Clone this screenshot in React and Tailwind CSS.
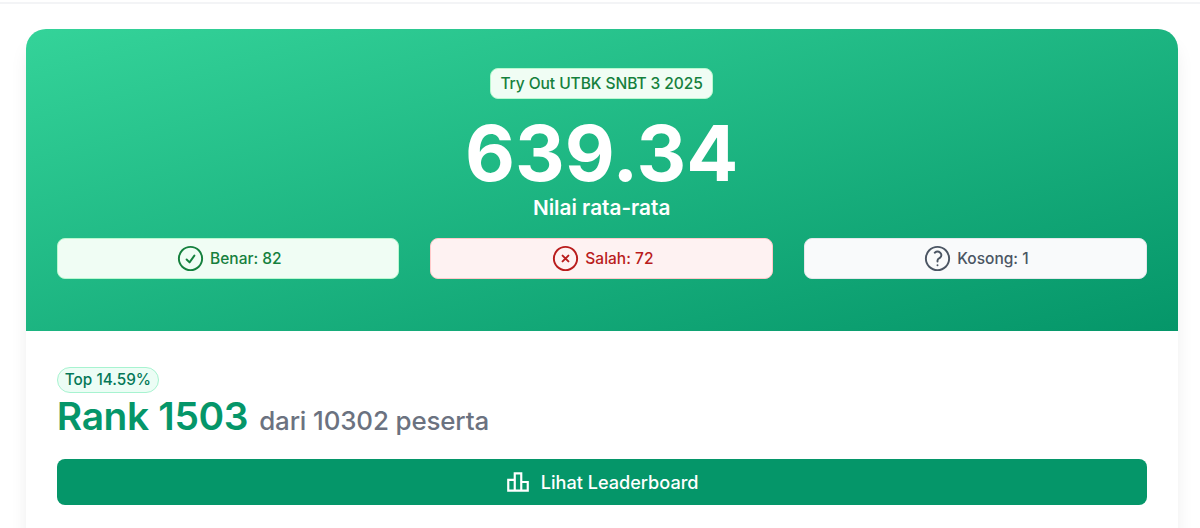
import React from "react";
import { MdOutlineLeaderboard } from "react-icons/md";

const result = {
  title: "Try Out UTBK SNBT 3 2025",
  score: "639.34",
  percentile: "14.59%",
  rank: 1503,
  participants: 10302,
};

const stats = [
  {
    label: "Benar",
    value: 82,
    style: "bg-[#f0fdf4] border-green-200 text-[#15803d]",
    icon: "M9 12.75 11.25 15 15 9.75M21 12a9 9 0 1 1-18 0 9 9 0 0 1 18 0Z",
  },
  {
    label: "Salah",
    value: 72,
    style: "bg-[#fef2f2] border-red-200 text-[#b91c1c]",
    icon: "m9.75 9.75 4.5 4.5m0-4.5-4.5 4.5M21 12a9 9 0 1 1-18 0 9 9 0 0 1 18 0Z",
  },
  {
    label: "Kosong",
    value: 1,
    style: "bg-[#f9fafb] border-gray-200 text-[#4b5563]",
    icon: "M9.879 7.519c1.171-1.025 3.071-1.025 4.242 0 1.172 1.025 1.172 2.687 0 3.712-.203.179-.43.326-.67.442-.745.361-1.45.999-1.45 1.827v.75M21 12a9 9 0 1 1-18 0 9 9 0 0 1 18 0Zm-9 5.25h.008v.008H12v-.008Z",
  },
];

function StatBox({ label, value, style, icon }) {
  return (
    <div className={`flex h-[41px] items-center justify-center gap-[4.5px] rounded-lg border ${style}`}>
      <svg className="size-[31px]" viewBox="0 0 24 24" fill="none" stroke="currentColor" strokeWidth="1.5" strokeLinecap="round" strokeLinejoin="round">
        <path d={icon} />
      </svg>
      <span className="text-[15.5px] font-[450]">{label}: {value}</span>
    </div>
  );
}

export default function App() {
  return (
    <div className="h-[528px] overflow-hidden bg-white pt-[2px] font-['Inter',sans-serif] antialiased">
      <div className="h-[2px] bg-gray-100" />

      <div className="mt-[25.4px] mr-[22.5px] ml-[25.8px] h-[620px] rounded-[20px] bg-white shadow-[0_13px_20px_-4px_rgba(0,0,0,0.1)]">
        {/* Nilai */}
        <div className="flex h-[301.2px] flex-col items-center rounded-t-[20px] bg-linear-to-br/srgb from-[#34d399] to-[#059669] px-[31px] pt-[38.6px]">
          <div className="flex h-[31px] items-center rounded-lg border border-green-200 bg-[#f0fdf4] px-[9px] text-[15.56px] font-[450] tracking-[-0.07px] text-[#15803d]">
            {result.title}
          </div>
          <div className="mt-[15px] text-[77px] leading-[78px] font-bold text-white">{result.score}</div>
          <div className="mt-[3px] text-[20.75px] leading-[26px] font-[640] text-white">Nilai rata-rata</div>
          <div className="mt-[17.4px] grid w-full grid-cols-3 gap-[31px]">
            {stats.map((s) => (
              <StatBox key={s.label} {...s} />
            ))}
          </div>
        </div>

        {/* Peringkat */}
        <div className="flex flex-col items-start px-[31px] pt-[36px]">
          <div className="flex h-[26px] items-center rounded-full border border-[#a7f3d0] bg-[#ecfdf5] px-[7px] pt-px text-[15.3px] font-[450] text-[#047857]">
            Top {result.percentile}
          </div>
          <div className="flex h-[45px] items-baseline gap-[11px]">
            <span className="text-[38.9px] leading-[45px] font-semibold tracking-[-0.35px] text-[#059669]">Rank {result.rank}</span>
            <span className="text-[25.9px] leading-[45px] font-[450] tracking-[-0.13px] text-[#6b7280]">dari {result.participants} peserta</span>
          </div>
          <button className="mt-[21px] flex h-[46px] w-full items-center justify-center gap-[10px] rounded-lg bg-[#059669] pt-px text-[18.1px] font-[540] text-white">
            <MdOutlineLeaderboard className="size-[26px]" />
            Lihat Leaderboard
          </button>
        </div>
      </div>
    </div>
  );
}
